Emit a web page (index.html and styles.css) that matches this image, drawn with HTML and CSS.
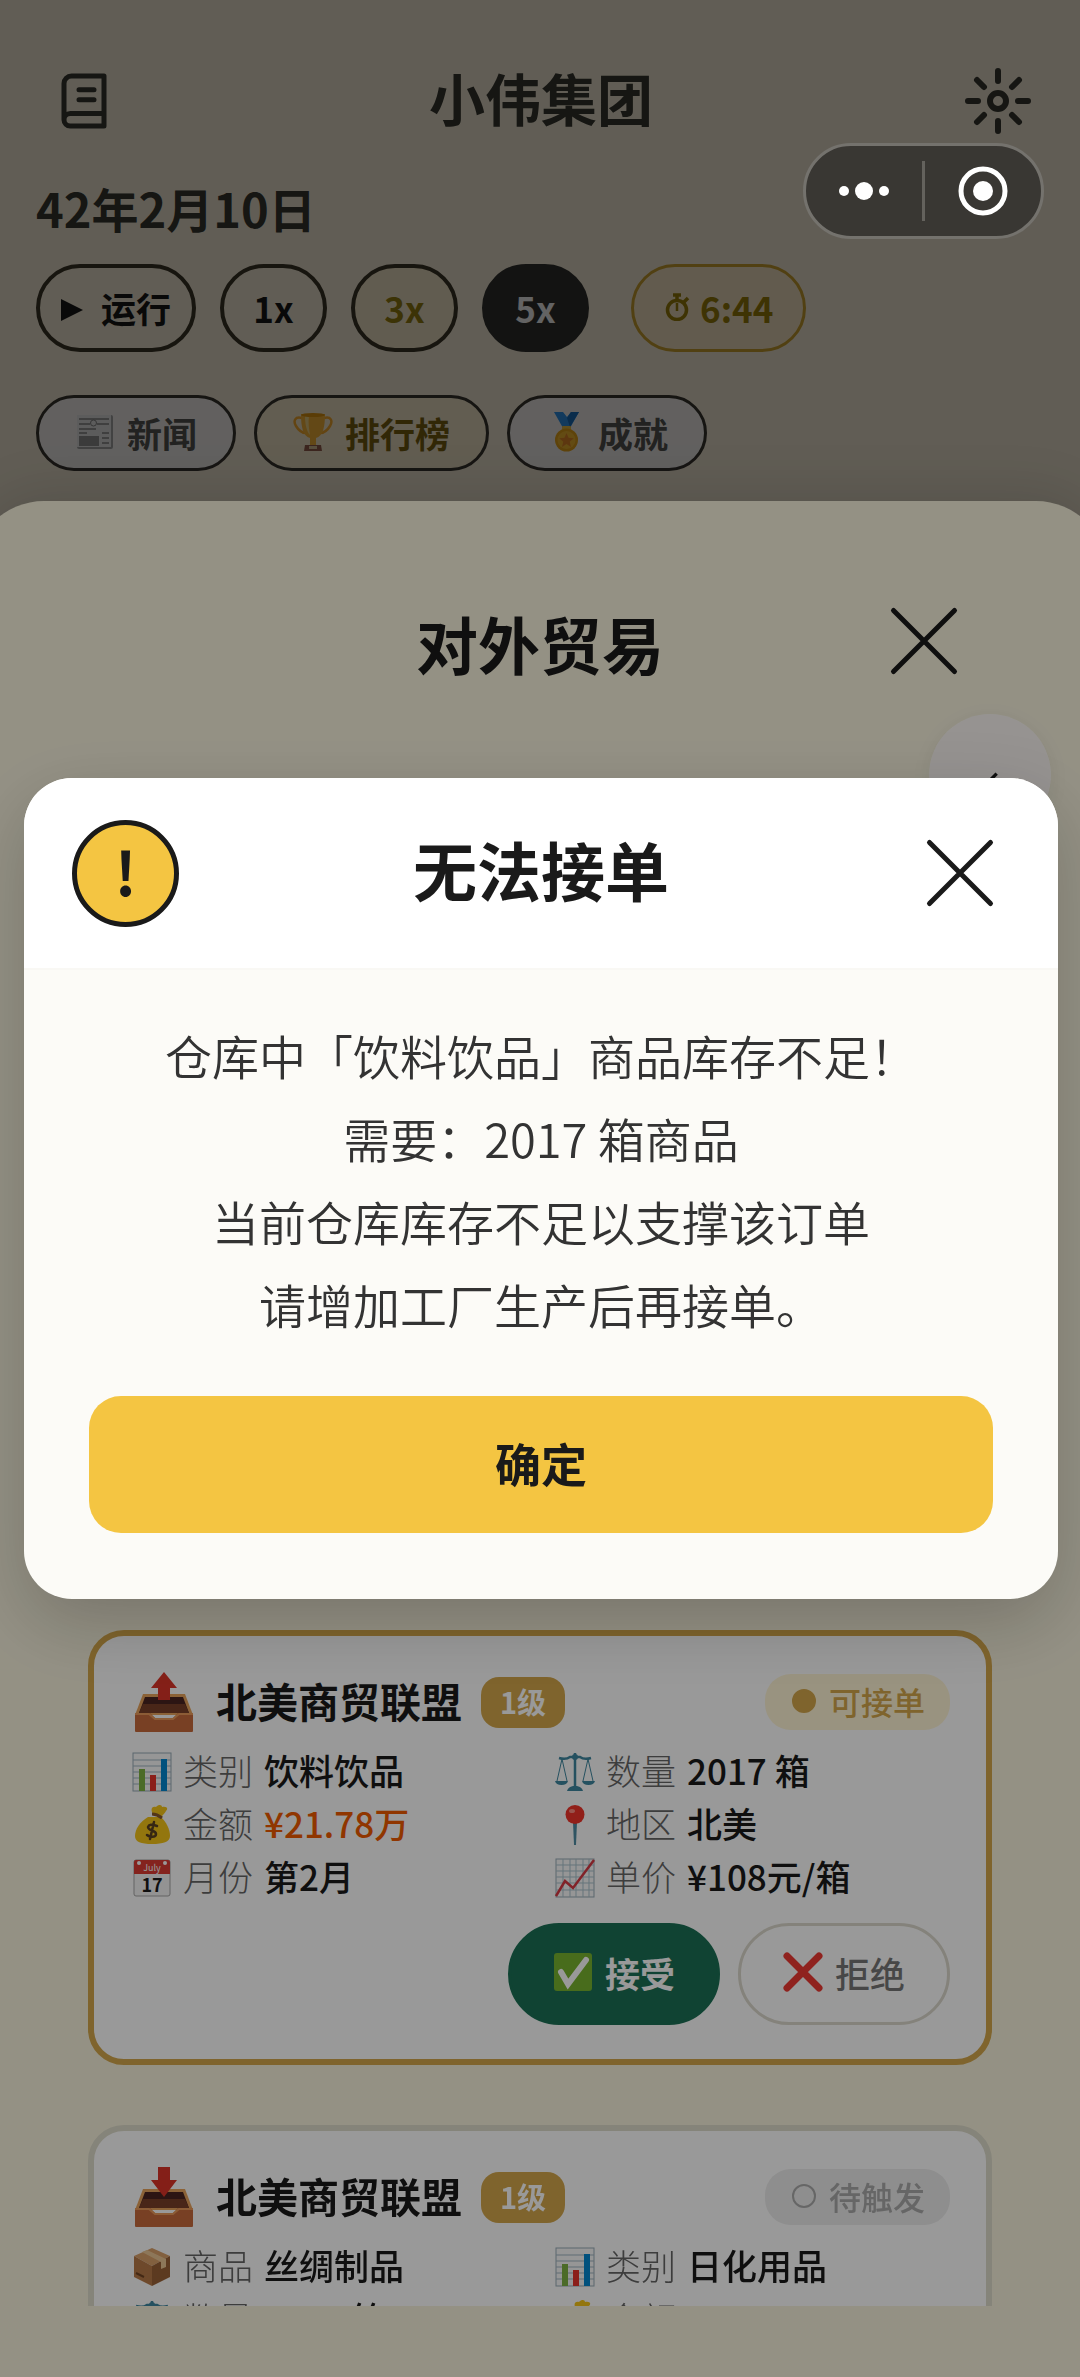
FILE: index.html
```
<!DOCTYPE html>
<html lang="zh-CN">
<head>
  <meta charset="UTF-8" />
  <meta name="viewport" content="width=device-width, initial-scale=1.0"/>
  <title>小伟集团</title>
  <link rel="stylesheet" href="styles.css">
</head>
<body>
  <!-- icon sprite -->
  <svg class="sprite" aria-hidden="true">
    <symbol id="i-close" viewBox="0 0 70 70">
      <path d="M4.500 4.500L65.500 65.500M65.500 4.500L4.500 65.500" fill="none" stroke="currentColor" stroke-width="5" stroke-linecap="round"/>
    </symbol>
    <symbol id="i-news" viewBox="0 0 40 40">
      <rect x="2" y="3" width="36" height="34" rx="2" fill="#a9a9a9"/>
      <rect x="2" y="3" width="34" height="32" fill="#ececec"/>
      <path d="M4 7h30M4 12h11M22 12h12M4 21h8M27 21h7M4 17h17M27 26h7M27 31h7" stroke="#8a8a8a" stroke-width="1.500"/>
      <circle cx="18.500" cy="11" r="3" fill="none" stroke="#8a8a8a"/>
      <rect x="4" y="24" width="20" height="10" fill="#999"/>
    </symbol>
    <symbol id="i-trophy" viewBox="0 0 40 40">
      <path d="M9 6C2 4 0 9 3 14s6 7 10 7M31 6c7-2 9 3 6 8s-6 7-10 7" fill="none" stroke="#ffb02f" stroke-width="2.500"/>
      <path d="M8 2h24c0 13-2 22-9 24v7h-6v-7C10 24 8 15 8 2z" fill="#ffba3a"/>
      <path d="M12 4c0 9 2 16 5 19-1-6-2-12-1-19z" fill="#ffe08a"/>
      <ellipse cx="20" cy="3" rx="12" ry="2" fill="#e89a10"/>
      <path d="M12 33h16l1 6H11z" fill="#9a6150"/>
      <rect x="16" y="34" width="8" height="3" fill="#e0c9a0"/>
    </symbol>
    <symbol id="i-medal" viewBox="0 0 40 40">
      <path d="M8 0h9l4 5 4-5h8L24 16h-7z" fill="#2f95ee"/>
      <path d="M25 0h8L24 15l-3-9z" fill="#1b72c0"/>
      <rect x="16" y="14" width="9" height="4" rx="1" fill="#f6c84a"/>
      <circle cx="20.500" cy="28" r="11.500" fill="#f2ac1c"/>
      <circle cx="20.500" cy="28" r="9" fill="#ffc234"/>
      <path d="M20.500 21l2.100 4.800 5.200.4-4 3.500 1.200 5.200-4.500-2.800-4.500 2.800 1.200-5.200-4-3.500 5.200-.4z" fill="#f0902c"/>
    </symbol>
    <symbol id="i-tray" viewBox="0 0 60 60">
      <path d="M9 22h42l8 21H1z" fill="#e8a35c"/>
      <path d="M11 25h38l6 16H5z" fill="#4a2420"/>
      <path d="M9 32h42l4 9H5z" fill="#7b4028"/>
      <path d="M1 41h15l5 5h18l5-5h15v18q0 1-1 1H2q-1 0-1-1z" fill="#c96c3c"/>
      <path d="M1 42h14l6 5h18l6-5h14" fill="none" stroke="#e99a5b" stroke-width="2"/>
    </symbol>
    <symbol id="i-outbox" viewBox="0 0 60 60">
      <use href="#i-tray"/>
      <path d="M30 0l13 16h-7v12H24V16h-7z" fill="#dc3428"/>
    </symbol>
    <symbol id="i-inbox" viewBox="0 0 60 60">
      <use href="#i-tray"/>
      <path d="M24 0h12v13h7L30 30 17 13h7z" fill="#dc3428"/>
    </symbol>
    <symbol id="i-bars" viewBox="0 0 40 40">
      <rect x="1" y="1" width="38" height="38" fill="#fafafa" stroke="#98acb8"/>
      <path d="M1 8h38M1 14h38M1 20h38M1 26h38M1 32h38" stroke="#9fb4c2"/>
      <path d="M7 17h6v22H7z" fill="#7db343"/>
      <path d="M18 23h6v16h-6z" fill="#e8352c"/>
      <path d="M29 7h6v32h-6z" fill="#0288d1"/>
    </symbol>
    <symbol id="i-scales" viewBox="0 0 40 40">
      <path d="M20 1v36M4 6q7 2 11-1h10q4 3 11 1" fill="none" stroke="#3f87a0" stroke-width="2.500"/>
      <path d="M7 7L2 29M7 7l5 22M33 7l-5 22M33 7l5 22" stroke="#3f87a0" fill="none"/>
      <path d="M0 29h13q-1 4-6.500 4T0 29zM27 29h13q-1 4-6.500 4T27 29zM12 39q1-4 6-5h4q5 1 6 5z" fill="#3f87a0"/>
      <circle cx="20" cy="5" r="3" fill="#3f87a0"/>
    </symbol>
    <symbol id="i-money" viewBox="0 0 40 40">
      <path d="M21 9c-3-5-1-8 3-7 3-3 6-2 6 0 4-1 7 1 4 4-1 2-3 4-5 6z" fill="#f5c518"/>
      <path d="M16 12c-8 5-13 12-13 19 0 6 6 8 17 8s18-2 18-8c0-7-4-14-9-19z" fill="#f5c518"/>
      <path d="M20 9q5 0 10 4" fill="none" stroke="#8a5a2a" stroke-width="3"/>
      <path d="M25 21q-8-3-9 1c0 4 8 3 8 7s-7 3-9 1M22 17l-4 17" fill="none" stroke="#5a4020" stroke-width="2.500" stroke-linecap="round"/>
    </symbol>
    <symbol id="i-pin" viewBox="0 0 40 40">
      <path d="M18 17h4l-1 23h-2z" fill="#4f8da3"/>
      <circle cx="20" cy="9.500" r="9.500" fill="#f2352b"/>
      <ellipse cx="17" cy="6" rx="3" ry="2" fill="#ff8d80"/>
    </symbol>
    <symbol id="i-trend" viewBox="0 0 40 40">
      <rect x="1" y="1" width="38" height="38" fill="#fafafa" stroke="#98acb8"/>
      <path d="M1 7h38M1 13h38M1 19h38M1 25h38M1 32h38M8 1v38M15 1v38M21 1v38M28 1v38M34 1v38" stroke="#a9c2cd"/>
      <path d="M1 38l9-15 8 7L39 2" fill="none" stroke="#d83a44" stroke-width="2.500"/>
    </symbol>
    <symbol id="i-box" viewBox="0 0 40 40">
      <path d="M20 1l18 8-18 10L2 9z" fill="#d9a069"/>
      <path d="M2 9l18 10v20L2 30z" fill="#b87a48"/>
      <path d="M38 9L20 19v20l18-9z" fill="#9a6236"/>
      <path d="M10 5l19 10v7l5-2v-8L15 3z" fill="#ecc795"/>
      <path d="M4 26l8 4" stroke="#6f4424" stroke-width="2"/>
    </symbol>
    <symbol id="i-check" viewBox="0 0 40 40">
      <rect x="1" y="1" width="38" height="38" rx="3" fill="#78b52f"/>
      <path d="M8 20l7 12L33 8" fill="none" stroke="#fff" stroke-width="6" stroke-linecap="round"/>
    </symbol>
    <symbol id="i-cross" viewBox="0 0 40 40">
      <path d="M4 4l32 32M36 4L4 36" stroke="#ee3a33" stroke-width="7" stroke-linecap="round"/>
    </symbol>
    <symbol id="i-watch" viewBox="0 0 26 28">
      <circle cx="13" cy="17" r="9.500" fill="none" stroke="currentColor" stroke-width="3.500"/>
      <path d="M13 2v6M9 2h8M20 9l4-4" stroke="currentColor" stroke-width="3.500" fill="none"/>
      <path d="M13 10v8" stroke="currentColor" stroke-width="2.500"/>
    </symbol>
  </svg>

  <div class="home">
    <header class="topbar">
      <button class="icon-btn" aria-label="手册">
        <svg viewBox="0 0 24 24" fill="none" stroke="currentColor" stroke-width="2" stroke-linecap="round" stroke-linejoin="round">
          <path d="M4 19.500V5a3 3 0 0 1 3-3h13v20H6.500a2.500 2.500 0 0 1 0-5H20M10 7.500h6M10 11.500h6"/>
        </svg>
      </button>
      <h1>小伟集团</h1>
      <button class="icon-btn" aria-label="设置">
        <svg viewBox="0 0 68 68" fill="none" stroke="currentColor" stroke-width="6" stroke-linecap="round">
          <circle cx="34" cy="34" r="8"/>
          <path d="M34 4v10M34 54v10M4 34h10M54 34h10M13 13l7 7M48 48l7 7M55 13l-7 7M20 48l-7 7"/>
        </svg>
      </button>
    </header>
    <div class="date">42年2月10日</div>
    <div class="speed-row">
      <button class="speed"><svg class="play" viewBox="0 0 22 22"><path d="M0 0l22 11L0 22z" fill="currentColor"/></svg>运行</button>
      <button class="speed">1x</button>
      <button class="speed vip">3x</button>
      <button class="speed active">5x</button>
      <button class="timer"><svg><use href="#i-watch"/></svg>6:44</button>
    </div>
    <div class="menu-row">
      <button class="menu"><svg><use href="#i-news"/></svg>新闻</button>
      <button class="menu gold"><svg><use href="#i-trophy"/></svg>排行榜</button>
      <button class="menu"><svg><use href="#i-medal"/></svg>成就</button>
    </div>
  </div>

  <!-- 对外贸易 -->
  <div class="sheet-mask">
    <section class="sheet">
      <div class="sheet-head">
        <h2>对外贸易</h2>
        <button class="close" aria-label="关闭"><svg><use href="#i-close"/></svg></button>
      </div>
      <div class="orders">
        <article class="order ready">
          <div class="order-head">
            <svg><use href="#i-outbox"/></svg>
            <h3>北美商贸联盟</h3>
            <span class="level">1级</span>
            <span class="status"><i></i>可接单</span>
          </div>
          <ul class="facts">
            <li><svg><use href="#i-bars"/></svg><span>类别</span><b>饮料饮品</b></li>
            <li><svg><use href="#i-scales"/></svg><span>数量</span><b>2017 箱</b></li>
            <li><svg><use href="#i-money"/></svg><span>金额</span><b class="price">¥21.78万</b></li>
            <li><svg><use href="#i-pin"/></svg><span>地区</span><b>北美</b></li>
            <li>
              <svg class="calendar" viewBox="0 0 40 40">
                <rect x="2" y="2" width="36" height="36" rx="2" fill="#f5f5f5" stroke="#a5a5a5"/>
                <path d="M4 2h32q2 0 2 2v12H2V4q0-2 2-2z" fill="#dc3b33"/>
                <circle cx="7" cy="5" r="2" fill="#fff"/>
                <circle cx="33" cy="5" r="2" fill="#fff"/>
                <text x="20" y="13" font-size="9" fill="#fff">July</text>
                <text x="20" y="34" font-size="18" font-weight="700" fill="#1c1c1c">17</text>
              </svg>
              <span>月份</span><b>第2月</b>
            </li>
            <li><svg><use href="#i-trend"/></svg><span>单价</span><b>¥108元/箱</b></li>
          </ul>
          <div class="order-actions">
            <button class="accept"><svg><use href="#i-check"/></svg>接受</button>
            <button class="reject"><svg><use href="#i-cross"/></svg>拒绝</button>
          </div>
        </article>
        <article class="order">
          <div class="order-head">
            <svg><use href="#i-inbox"/></svg>
            <h3>北美商贸联盟</h3>
            <span class="level">1级</span>
            <span class="status"><i></i>待触发</span>
          </div>
          <ul class="facts">
            <li><svg><use href="#i-box"/></svg><span>商品</span><b>丝绸制品</b></li>
            <li><svg><use href="#i-bars"/></svg><span>类别</span><b>日化用品</b></li>
            <li><svg><use href="#i-scales"/></svg><span>数量</span><b>1000 箱</b></li>
            <li><svg><use href="#i-money"/></svg><span>金额</span></li>
          </ul>
        </article>
      </div>
    </section>
    <button class="float-btn" aria-label="收起"><svg viewBox="0 0 24 24"><path d="M14 2L4 12l10 10" fill="none" stroke="currentColor" stroke-width="4"/></svg></button>
  </div>

  <!-- 提示弹窗 -->
  <div class="dialog-mask">
    <div class="dialog" role="dialog" aria-labelledby="dialogTitle">
      <div class="dialog-head">
        <span class="warn">!</span>
        <h2 id="dialogTitle">无法接单</h2>
        <button class="close" aria-label="关闭"><svg><use href="#i-close"/></svg></button>
      </div>
      <div class="dialog-body">
        <p>仓库中「饮料饮品」商品库存不足！<br>需要：2017 箱商品<br>当前仓库库存不足以支撑该订单<br>请增加工厂生产后再接单。</p>
        <button class="confirm">确定</button>
      </div>
    </div>
  </div>

  <div class="capsule">
    <button aria-label="更多"><svg viewBox="0 0 50 50" fill="currentColor"><circle cx="5" cy="25" r="5"/><circle cx="25" cy="25" r="9"/><circle cx="45" cy="25" r="5"/></svg></button>
    <button aria-label="退出"><svg viewBox="0 0 50 50"><circle cx="25" cy="25" r="22" fill="none" stroke="currentColor" stroke-width="5"/><circle cx="25" cy="25" r="10" fill="currentColor"/></svg></button>
  </div>
</body>
</html>
```
FILE: styles.css
```
* {
  box-sizing: border-box;
}

html, body {
  margin: 0;
  padding: 0;
  height: 100%;
  overflow: hidden;
  background: #f9efda;
  color: #1a1a1a;
  font-family: "Noto Sans CJK SC", sans-serif;
}

h1, h2, h3, p, ul {
  margin: 0;
  padding: 0;
}

button {
  font-family: inherit;
  color: inherit;
  background: none;
  border: 0;
  padding: 0;
  cursor: pointer;
}

svg {
  display: block;
  flex: none;
}

.sprite {
  position: absolute;
  width: 0;
  height: 0;
}

/* home */
.home {
  padding: 62px 36px 0;
  color: #3a3a32;
}

.topbar {
  display: flex;
  align-items: center;
  justify-content: space-between;
  height: 78px;
  padding: 0 12px 0 14px;
}

.topbar h1 {
  padding-bottom: 8px;
  font-size: 56px;
  line-height: 78px;
}

.icon-btn, .icon-btn svg {
  width: 68px;
  height: 68px;
}

.icon-btn:first-child svg {
  padding: 4px;
}

.date {
  margin-top: 36px;
  font-size: 47px;
  font-weight: 700;
  line-height: 64px;
}

.speed-row, .menu-row {
  display: flex;
  gap: 24px;
}

.speed-row {
  margin-top: 24px;
}

.menu-row {
  gap: 18px;
  margin-top: 43px;
}

.speed, .timer, .menu {
  display: flex;
  align-items: center;
  justify-content: center;
  padding-bottom: 2px;
  font-size: 35px;
  font-weight: 700;
}

.speed {
  min-width: 107px;
  height: 88px;
  padding: 0 21px 2px;
  border: 4px solid #3d3628;
  border-radius: 44px;
  color: #1a1a1a;
}

.play {
  width: 22px;
  height: 22px;
  margin: 6px 18px 0 0;
}

.speed.vip {
  color: #9c8410;
  background: rgba(250, 220, 130, 0.15);
}

.speed.active {
  border-color: #343430;
  color: #fff;
  background: #343430;
}

.timer {
  height: 88px;
  gap: 10px;
  margin-left: 18px;
  padding: 0 30px 2px;
  border: 3px solid #d0a530;
  border-radius: 44px;
  background: #fceac8;
  color: #a08408;
}

.timer svg {
  width: 26px;
  height: 28px;
}

.menu {
  height: 76px;
  gap: 12px;
  padding: 0 36px 2px;
  border: 3px solid #3a3630;
  border-radius: 38px;
  background: #fbf8f5;
  color: #5a5a56;
}

.menu svg {
  width: 40px;
  height: 40px;
}

.menu.gold {
  background: #fbeed0;
  color: #806610;
}

/* bottom sheet */
.sheet-mask {
  position: fixed;
  inset: 0;
  display: flex;
  flex-direction: column;
  padding-top: 501px;
  overflow: hidden;
  background: rgba(0, 0, 0, 0.35);
}

.sheet {
  flex: 1;
  min-height: 0;
  display: flex;
  flex-direction: column;
  margin: 0 -28px;
  padding: 0 116px 71px;
  border-radius: 72px 72px 0 0;
  background: #f7f2dd;
  box-shadow: 0 -12px 60px rgba(0, 0, 0, 0.12);
}

.sheet-head {
  position: relative;
  padding: 100px 0 54px;
  text-align: center;
}

.sheet-head h2 {
  font-size: 62px;
  line-height: 84px;
}

.close, .close svg {
  width: 70px;
  height: 70px;
}

.sheet-head .close {
  position: absolute;
  top: 105px;
  right: 33px;
}

.float-btn {
  position: absolute;
  top: 714px;
  right: 29px;
  width: 122px;
  height: 122px;
  display: flex;
  align-items: center;
  justify-content: center;
  padding: 14px 0 0 10px;
  border-radius: 50%;
  background: #faf6f2;
  box-shadow: 0 4px 24px rgba(0, 0, 0, 0.08);
}

.float-btn svg {
  width: 20px;
  height: 20px;
}

.orders {
  flex: 1;
  min-height: 0;
  overflow: hidden;
  padding-top: 891px;
}

.order {
  margin-bottom: 60px;
  padding: 34px 36px 34px 38px;
  border: 6px solid #dedccb;
  border-radius: 36px;
  background: #fff;
}

.order.ready {
  border-color: #d4a74b;
}

.order-head {
  display: flex;
  align-items: center;
  height: 64px;
}

.order-head svg {
  width: 60px;
  height: 60px;
  margin-left: 2px;
}

.order-head h3 {
  margin: 0 19px 0 22px;
  padding-bottom: 4px;
  font-size: 41px;
}

.level {
  padding: 0 19px 2px;
  border-radius: 18px;
  background: #d4a74b;
  color: #fff;
  font-size: 29px;
  font-weight: 700;
  line-height: 49px;
}

.status {
  display: flex;
  align-items: center;
  gap: 13px;
  margin-left: auto;
  padding: 0 25px 2px 27px;
  border-radius: 26px;
  background: #ededed;
  color: #aaa;
  font-size: 32px;
  font-weight: 500;
  line-height: 54px;
}

.status i {
  width: 24px;
  height: 24px;
  border: 2px solid currentColor;
  border-radius: 50%;
}

.ready .status {
  background: #fff5d6;
  color: #d4a74b;
}

.ready .status i {
  background: currentColor;
}

.facts {
  display: grid;
  grid-template-columns: 1fr 1fr;
  column-gap: 28px;
  margin-top: 11px;
  list-style: none;
}

.facts li {
  display: flex;
  align-items: center;
  height: 53px;
  font-size: 35px;
  white-space: nowrap;
}

.facts svg, .order-actions svg {
  width: 40px;
  height: 40px;
}

.calendar text {
  text-anchor: middle;
}

.facts span {
  margin: 0 11px;
  padding-bottom: 4px;
  color: #666;
  font-weight: 300;
}

.facts b {
  padding-bottom: 4px;
  font-weight: 500;
}

.facts .price {
  color: #f05a00;
}

.order-actions {
  display: flex;
  justify-content: flex-end;
  gap: 18px;
  margin-top: 19px;
}

.order-actions button {
  display: flex;
  align-items: center;
  gap: 12px;
  height: 102px;
  padding: 0 42px 4px;
  border: 3px solid #dcd9cd;
  border-radius: 51px;
  color: #777;
  font-size: 35px;
  font-weight: 500;
}

.order-actions .accept {
  border-color: #1b7155;
  background: #1b7155;
  color: #fff;
  font-weight: 700;
}

/* dialog */
.dialog-mask {
  position: fixed;
  inset: 0;
  display: flex;
  align-items: center;
  padding: 0 22px 0 24px;
  background: rgba(0, 0, 0, 0.4);
}

.dialog {
  flex: 1;
  overflow: hidden;
  border-radius: 48px;
  background: #fcfbf7;
  box-shadow: 0 24px 72px rgba(0, 0, 0, 0.2);
}

.dialog-head {
  display: flex;
  align-items: center;
  height: 192px;
  padding: 0 63px 0 48px;
  border-bottom: 2px solid #f9f8f4;
  background: #fff;
}

.dialog-head h2 {
  flex: 1;
  padding: 0 22px 10px 0;
  font-size: 64px;
  line-height: 90px;
  text-align: center;
}

.warn {
  width: 107px;
  height: 107px;
  border: 5px solid #1a1a1a;
  border-radius: 50%;
  background: #f4c542;
  font-size: 60px;
  font-weight: 700;
  line-height: 90px;
  text-align: center;
}

.dialog-body {
  padding: 43px 65px 66px;
}

.dialog-body p {
  color: #333;
  font-size: 47px;
  font-weight: 350;
  line-height: 83px;
  text-align: center;
}

.confirm {
  width: 100%;
  height: 137px;
  margin-top: 51px;
  padding-bottom: 5px;
  border-radius: 32px;
  background: #f4c542;
  font-size: 46px;
  font-weight: 700;
}

/* mini program capsule */
.capsule {
  position: fixed;
  top: 143px;
  right: 36px;
  display: flex;
  align-items: center;
  width: 241px;
  height: 96px;
  border: 3px solid #74726d;
  border-radius: 48px;
  background: #393733;
  color: #fff;
}

.capsule button {
  flex: 1;
  display: flex;
  justify-content: center;
}

.capsule button + button {
  border-left: 3px solid #64625d;
  padding: 5px 0;
}

.capsule svg {
  width: 50px;
  height: 50px;
}
```
